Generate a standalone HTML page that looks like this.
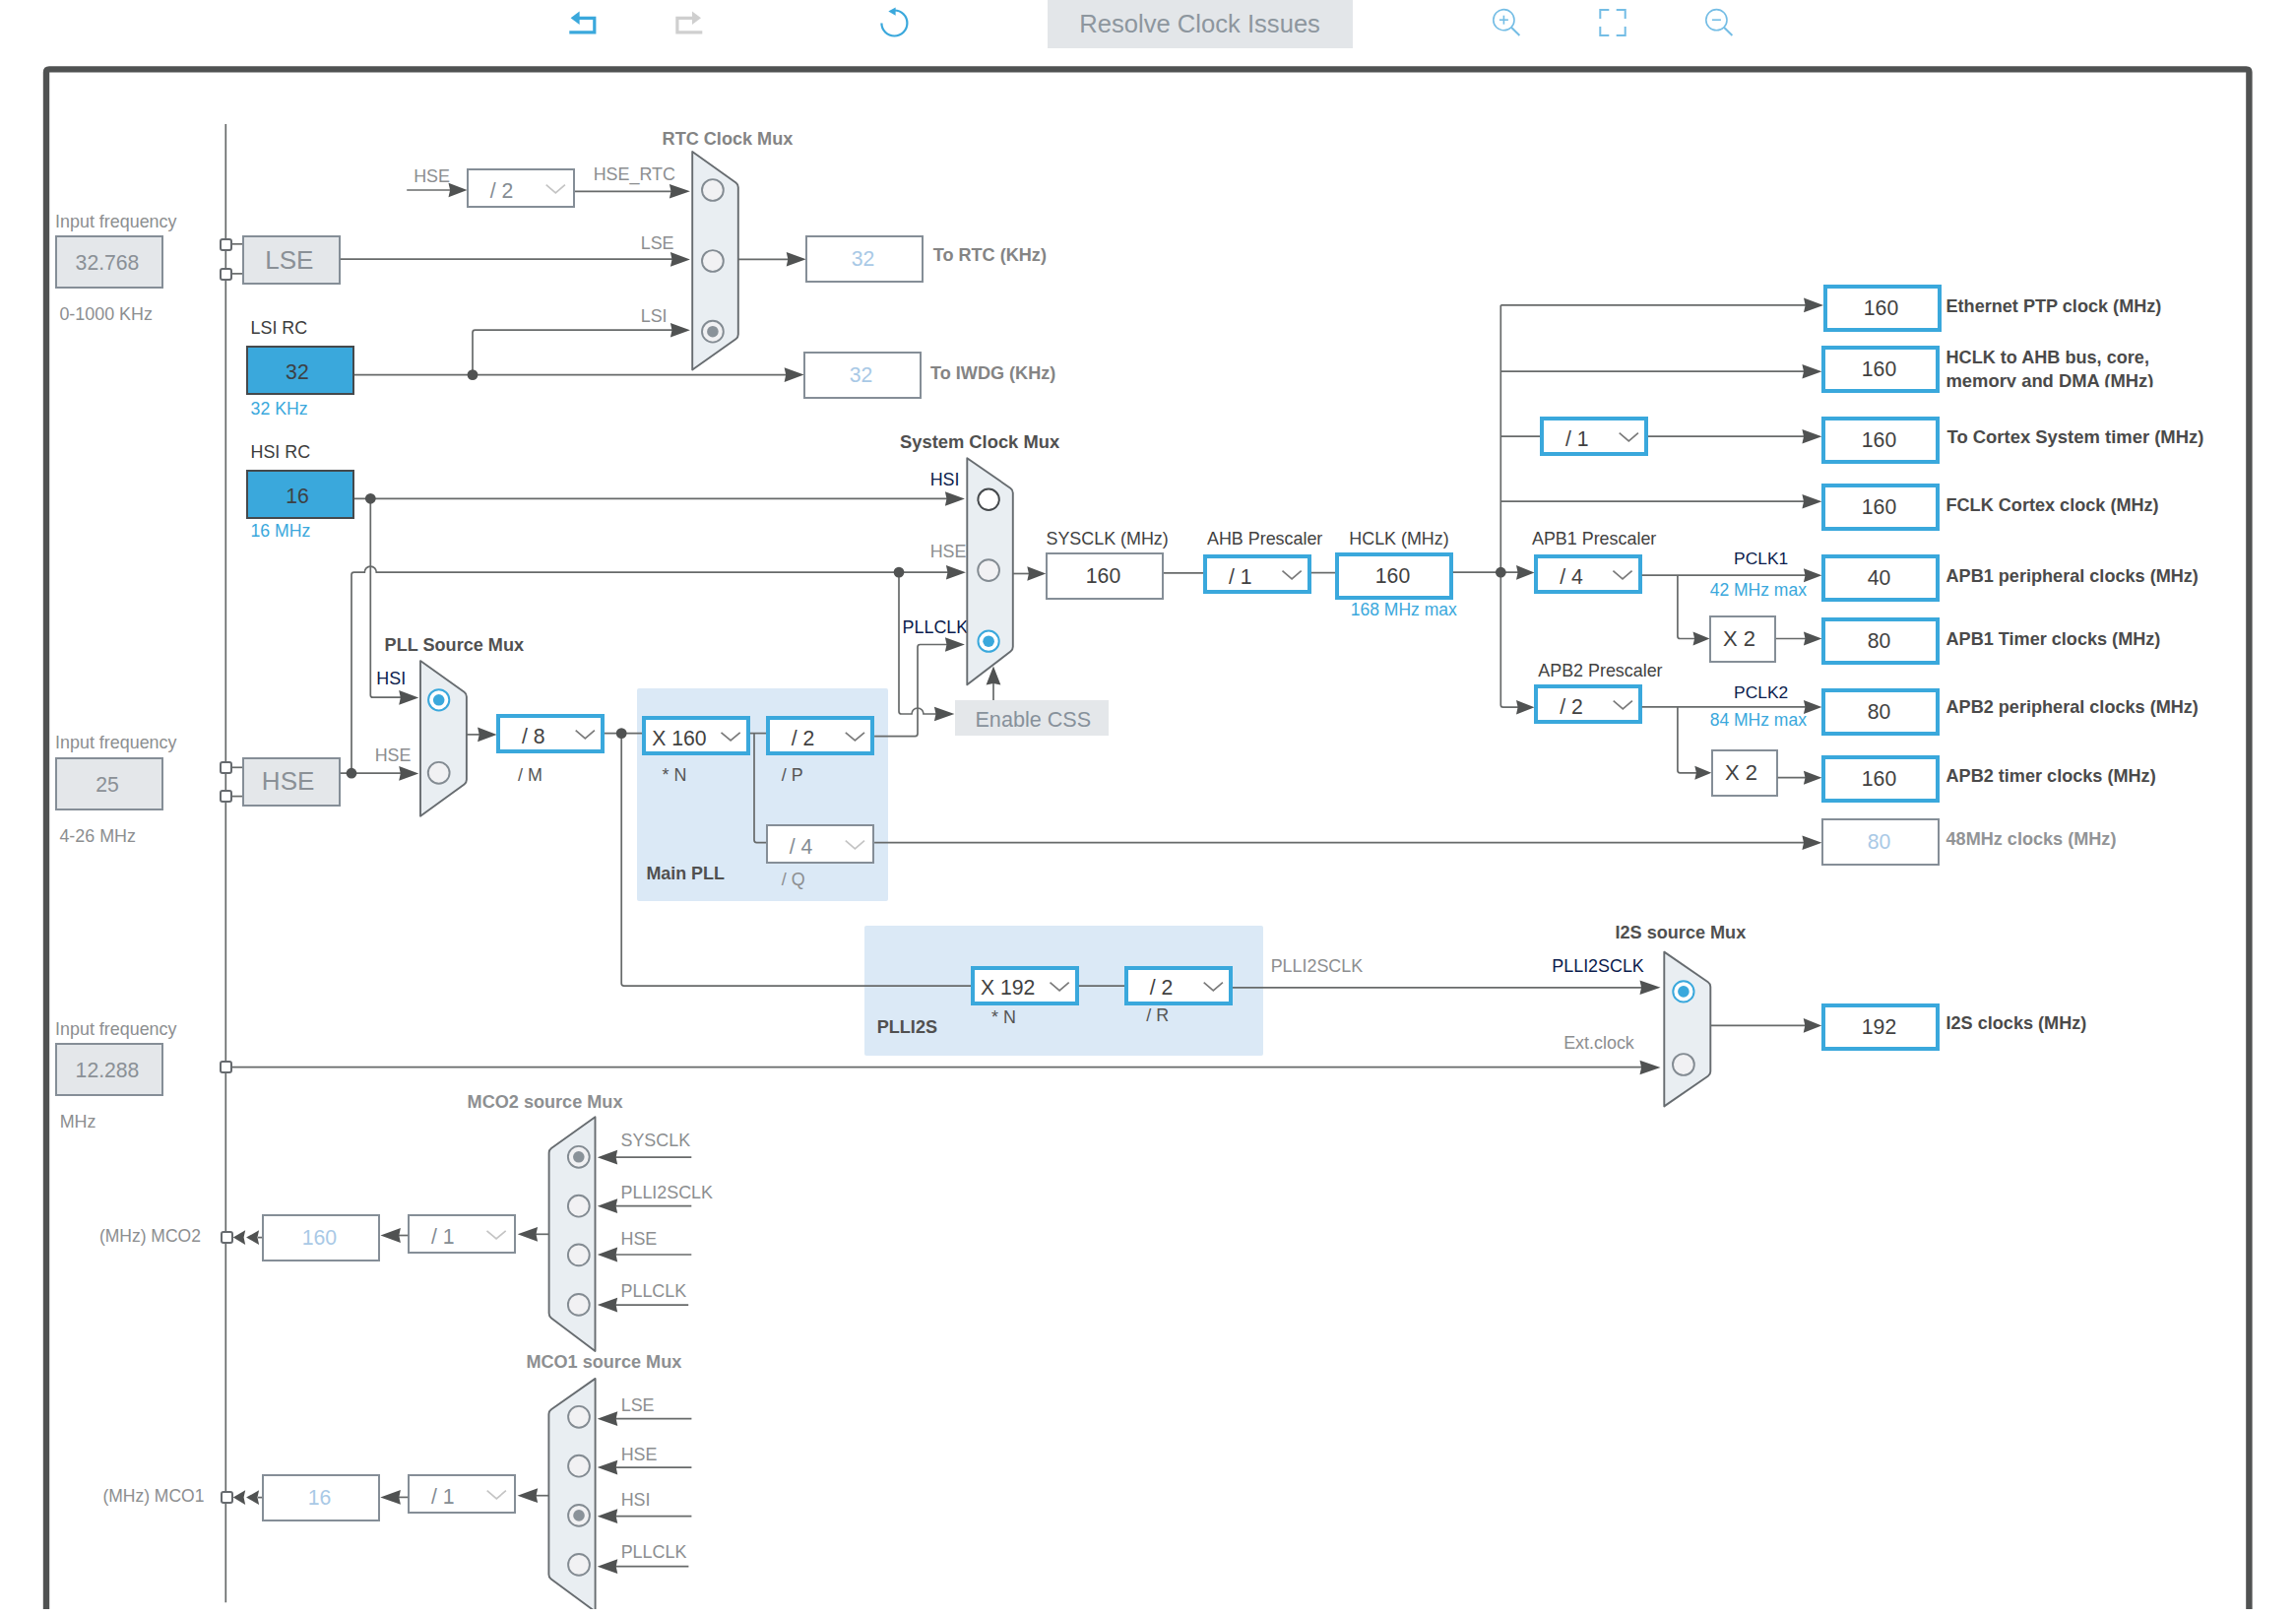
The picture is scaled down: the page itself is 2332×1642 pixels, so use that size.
<!DOCTYPE html>
<html><head><meta charset="utf-8"><title>Clock Configuration</title>
<style>
html,body{margin:0;padding:0;background:#fff;}
body{width:2332px;height:1642px;overflow:hidden;font-family:"Liberation Sans",sans-serif;}
svg{display:block;font-family:"Liberation Sans",sans-serif;}
</style></head><body>
<svg width="2332" height="1642" viewBox="0 0 2332 1642">
<rect x="1064.00" y="0.00" width="310.00" height="49.00" rx="0" fill="#e3e6e9"/>
<rect x="647.00" y="699.00" width="255.00" height="216.00" rx="2" fill="#dbe9f6"/>
<rect x="878.00" y="940.00" width="405.00" height="132.00" rx="2" fill="#dbe9f6"/>
<rect x="970.00" y="711.00" width="156.00" height="36.00" rx="0" fill="#e4e7ea"/>
<text x="1218.6" y="33.0" font-size="25.6" fill="#8d969e" font-weight="normal" text-anchor="middle" >Resolve Clock Issues</text>
<g fill="none" stroke="#3aa8dc" stroke-width="3.2"><path d="M578.3,32.8 H603.8 V18.3 H586"/></g>
<polygon points="579.6,18.2 588.6,11.4 588.6,25" fill="#3aa8dc"/>
<g fill="none" stroke="#cfcfcf" stroke-width="3.2"><path d="M713.3,32.8 H687.9 V18.3 H705.6"/></g>
<polygon points="712,18.2 703,11.4 703,25" fill="#cfcfcf"/>
<path d="M908.4,10.5 A13,13 0 1 1 895.4,23.5" fill="none" stroke="#3aa8dc" stroke-width="2.2"/>
<polygon points="902.3,11.6 909.6,7.6 909.6,15.8" fill="#3aa8dc"/>
<circle cx="1527.4" cy="20.2" r="10.6" fill="none" stroke="#74bde5" stroke-width="1.6"/>
<path d="M1535.0,27.8 L1543.4,36" stroke="#74bde5" stroke-width="2" fill="none"/>
<path d="M1522.9,20.2 H1531.9" stroke="#74bde5" stroke-width="1.6" fill="none"/>
<path d="M1527.4,15.7 V24.7" stroke="#74bde5" stroke-width="1.6" fill="none"/>
<circle cx="1743.4" cy="20.2" r="10.6" fill="none" stroke="#74bde5" stroke-width="1.6"/>
<path d="M1751.0,27.8 L1759.4,36" stroke="#74bde5" stroke-width="2" fill="none"/>
<path d="M1738.9,20.2 H1747.9" stroke="#74bde5" stroke-width="1.6" fill="none"/>
<path d="M1625.3,19 V10 H1634.3 M1641.7,10 H1650.7 V19 M1650.7,27 V36 H1641.7 M1634.3,36 H1625.3 V27" fill="none" stroke="#74bde5" stroke-width="2"/>
<path d="M47,1634 V73.3 Q47,70.4 50,70.4 H2281.5 Q2284.4,70.4 2284.4,73.3 V1634" fill="none" stroke="#505252" stroke-width="6.4"/>
<path d="M229.3,126 V1627.3" fill="none" stroke="#676a6a" stroke-width="1.7" />
<text x="56.1" y="230.6" font-size="17.9" fill="#8c8e90" font-weight="normal" text-anchor="start" >Input frequency</text>
<rect x="57.00" y="240.00" width="108.00" height="52.00" rx="0" fill="#e4e7ea" stroke="#858e97" stroke-width="2"/>
<text x="109.0" y="274.2" font-size="21.2" fill="#8a9096" font-weight="normal" text-anchor="middle" >32.768</text>
<text x="60.4" y="324.6" font-size="17.9" fill="#8c8e90" font-weight="normal" text-anchor="start" >0-1000 KHz</text>
<polyline points="235.0,247.8 246.5,247.8" fill="none" stroke="#676a6a" stroke-width="1.7" />
<polyline points="235.0,277.9 246.5,277.9" fill="none" stroke="#676a6a" stroke-width="1.7" />
<rect x="224.00" y="243.00" width="11.00" height="11.00" rx="2" fill="#fff" stroke="#666a6e" stroke-width="2"/>
<rect x="224.00" y="273.00" width="11.00" height="11.00" rx="2" fill="#fff" stroke="#666a6e" stroke-width="2"/>
<rect x="247.00" y="240.00" width="98.00" height="48.00" rx="0" fill="#e4e7ea" stroke="#858e97" stroke-width="2"/>
<text x="293.8" y="272.8" font-size="26" fill="#8a9096" font-weight="normal" text-anchor="middle" >LSE</text>
<polyline points="345.7,263.2 690.0,263.2" fill="none" stroke="#676a6a" stroke-width="1.7" />
<polygon points="700.9,263.4 680.9,256.1 682.5,263.4 680.9,270.7" fill="#505252"/>
<text x="650.7" y="252.5" font-size="17.9" fill="#8c8e90" font-weight="normal" text-anchor="start" >LSE</text>
<text x="420.2" y="184.7" font-size="17.9" fill="#8c8e90" font-weight="normal" text-anchor="start" >HSE</text>
<polyline points="413.2,193.0 460.0,193.0" fill="none" stroke="#676a6a" stroke-width="1.7" />
<polygon points="474.5,193.0 455.5,185.7 457.1,193.0 455.5,200.3" fill="#505252"/>
<rect x="475.00" y="172.00" width="108.00" height="38.00" rx="0" fill="#fff" stroke="#858e97" stroke-width="2"/>
<text x="497.7" y="200.5" font-size="21.2" fill="#848c93" font-weight="normal" text-anchor="start" >/ 2</text>
<path d="M554.7,187.7 L564.3,195.9 L573.9,187.7" fill="none" stroke="#c4c4c4" stroke-width="1.7" />
<text x="602.7" y="182.7" font-size="17.9" fill="#8c8e90" font-weight="normal" text-anchor="start" >HSE_RTC</text>
<polyline points="584.0,194.3 690.0,194.3" fill="none" stroke="#676a6a" stroke-width="1.7" />
<polygon points="700.9,194.3 679.9,187.0 681.5,194.3 679.9,201.6" fill="#505252"/>
<text x="672.6" y="146.9" font-size="18.1" fill="#848484" font-weight="bold" text-anchor="start" >RTC Clock Mux</text>
<path d="M703.2,154.0 L747.4,185.5 Q749.8,187.2 749.8,190.2 L749.8,339.5 Q749.8,342.5 747.4,344.2 L703.2,375.5 Z" fill="#e9eef2" stroke="#676c70" stroke-width="1.9" stroke-linejoin="round" />
<circle cx="723.9" cy="193.0" r="10.899999999999999" fill="#f1f1f3" stroke="#838b92" stroke-width="1.9"/>
<circle cx="723.9" cy="265.0" r="10.899999999999999" fill="#f1f1f3" stroke="#838b92" stroke-width="1.9"/>
<circle cx="723.9" cy="336.7" r="10.899999999999999" fill="#f1f1f3" stroke="#838b92" stroke-width="1.9"/>
<circle cx="723.9" cy="336.7" r="5.8" fill="#8a9299"/>
<polyline points="749.7,263.3 805.0,263.3" fill="none" stroke="#676a6a" stroke-width="1.7" />
<polygon points="818.7,263.3 798.7,256.0 800.3,263.3 798.7,270.6" fill="#505252"/>
<rect x="819.00" y="240.00" width="118.00" height="46.00" rx="0" fill="#fff" stroke="#858e97" stroke-width="2"/>
<text x="876.5" y="270.2" font-size="21.2" fill="#a9c9e6" font-weight="normal" text-anchor="middle" >32</text>
<text x="947.7" y="265.0" font-size="18.1" fill="#848484" font-weight="bold" text-anchor="start" >To RTC (KHz)</text>
<text x="254.5" y="338.8" font-size="17.9" fill="#3c3c3c" font-weight="normal" text-anchor="start" >LSI RC</text>
<rect x="251.00" y="352.00" width="108.00" height="48.00" rx="0" fill="#3aa8dc" stroke="#45494c" stroke-width="2"/>
<text x="301.9" y="384.6" font-size="21.2" fill="#3d4145" font-weight="normal" text-anchor="middle" >32</text>
<text x="254.6" y="420.7" font-size="17.7" fill="#3aa8dc" font-weight="normal" text-anchor="start" >32 KHz</text>
<polyline points="359.8,380.6 805.0,380.6" fill="none" stroke="#676a6a" stroke-width="1.7" />
<polygon points="816.6,380.6 796.6,373.3 798.2,380.6 796.6,387.9" fill="#505252"/>
<path d="M480,380.6 V337.7 Q480,335.2 482.5,335.2 H690" fill="none" stroke="#676a6a" stroke-width="1.7" />
<polygon points="700.9,335.2 680.9,327.9 682.5,335.2 680.9,342.5" fill="#505252"/>
<text x="650.7" y="326.6" font-size="17.9" fill="#8c8e90" font-weight="normal" text-anchor="start" >LSI</text>
<rect x="817.00" y="358.00" width="118.00" height="46.00" rx="0" fill="#fff" stroke="#858e97" stroke-width="2"/>
<text x="874.5" y="388.2" font-size="21.2" fill="#a9c9e6" font-weight="normal" text-anchor="middle" >32</text>
<text x="945.0" y="384.5" font-size="18.1" fill="#848484" font-weight="bold" text-anchor="start" >To IWDG (KHz)</text>
<text x="254.5" y="465.0" font-size="17.9" fill="#3c3c3c" font-weight="normal" text-anchor="start" >HSI RC</text>
<rect x="251.00" y="478.00" width="108.00" height="48.00" rx="0" fill="#3aa8dc" stroke="#45494c" stroke-width="2"/>
<text x="302.0" y="510.6" font-size="21.2" fill="#3d4145" font-weight="normal" text-anchor="middle" >16</text>
<text x="254.5" y="544.7" font-size="17.7" fill="#3aa8dc" font-weight="normal" text-anchor="start" >16 MHz</text>
<polyline points="359.8,506.3 968.0,506.3" fill="none" stroke="#676a6a" stroke-width="1.7" />
<polygon points="979.9,506.5 959.9,499.2 961.5,506.5 959.9,513.8" fill="#505252"/>
<path d="M376.3,506.3 V705.7 Q376.3,708.2 378.8,708.2 H410" fill="none" stroke="#676a6a" stroke-width="1.7" />
<polygon points="425.2,708.4 405.2,701.1 406.8,708.4 405.2,715.7" fill="#505252"/>
<text x="56.1" y="760.1" font-size="17.9" fill="#8c8e90" font-weight="normal" text-anchor="start" >Input frequency</text>
<rect x="57.00" y="770.00" width="108.00" height="52.00" rx="0" fill="#e4e7ea" stroke="#858e97" stroke-width="2"/>
<text x="109.0" y="804.2" font-size="21.2" fill="#8a9096" font-weight="normal" text-anchor="middle" >25</text>
<text x="60.4" y="854.8" font-size="17.9" fill="#8c8e90" font-weight="normal" text-anchor="start" >4-26 MHz</text>
<polyline points="235.0,779.3 246.5,779.3" fill="none" stroke="#676a6a" stroke-width="1.7" />
<polyline points="235.0,808.6 246.5,808.6" fill="none" stroke="#676a6a" stroke-width="1.7" />
<rect x="224.00" y="774.00" width="11.00" height="11.00" rx="2" fill="#fff" stroke="#666a6e" stroke-width="2"/>
<rect x="224.00" y="803.00" width="11.00" height="11.00" rx="2" fill="#fff" stroke="#666a6e" stroke-width="2"/>
<rect x="247.00" y="770.00" width="98.00" height="48.00" rx="0" fill="#e4e7ea" stroke="#858e97" stroke-width="2"/>
<text x="292.6" y="802.4" font-size="26" fill="#8a9096" font-weight="normal" text-anchor="middle" >HSE</text>
<polyline points="345.7,785.2 410.0,785.2" fill="none" stroke="#676a6a" stroke-width="1.7" />
<polygon points="425.2,785.4 405.2,778.1 406.8,785.4 405.2,792.7" fill="#505252"/>
<path d="M357,785.2 V583.6 Q357,581.1 359.5,581.1 H370.3 A6,6 0 0 1 382.3,581.1 H968" fill="none" stroke="#676a6a" stroke-width="1.7" />
<polygon points="980.9,581.2 960.9,573.9 962.5,581.2 960.9,588.5" fill="#505252"/>
<path d="M913,581.1 V722.4 Q913,725 915.6,725 H926 A6,6 0 0 1 938,725 H955" fill="none" stroke="#676a6a" stroke-width="1.7" />
<polygon points="969.4,725.0 948.9,717.7 950.5,725.0 948.9,732.3" fill="#505252"/>
<text x="390.6" y="661.2" font-size="18.1" fill="#505050" font-weight="bold" text-anchor="start" >PLL Source Mux</text>
<text x="382.3" y="694.6" font-size="17.9" fill="#0b1c4d" font-weight="normal" text-anchor="start" >HSI</text>
<text x="380.7" y="773.0" font-size="17.9" fill="#8c8e90" font-weight="normal" text-anchor="start" >HSE</text>
<path d="M427.0,671.1 L471.5,702.8 Q473.9,704.5 473.9,707.5 L473.9,791.8 Q473.9,794.8 471.5,796.6 L427.0,828.7 Z" fill="#e9eef2" stroke="#676c70" stroke-width="1.9" stroke-linejoin="round" />
<circle cx="445.7" cy="710.8" r="10.6" fill="#fff" stroke="#3aa8dc" stroke-width="2"/>
<circle cx="445.7" cy="710.8" r="5.8" fill="#3aa8dc"/>
<circle cx="445.7" cy="784.8" r="10.899999999999999" fill="#f1f1f3" stroke="#838b92" stroke-width="1.9"/>
<polyline points="473.9,745.9 490.0,745.9" fill="none" stroke="#676a6a" stroke-width="1.7" />
<polygon points="504.6,745.9 485.1,738.6 486.7,745.9 485.1,753.2" fill="#505252"/>
<rect x="506.00" y="727.00" width="106.00" height="36.00" rx="0" fill="#fff" stroke="#3aa8dc" stroke-width="4"/>
<text x="530.1" y="754.5" font-size="21.2" fill="#414141" font-weight="normal" text-anchor="start" >/ 8</text>
<path d="M584.7,741.6 L594.3,749.9 L603.9,741.6" fill="none" stroke="#7a7a7a" stroke-width="1.7" />
<text x="526.0" y="792.5" font-size="17.9" fill="#555" font-weight="normal" text-anchor="start" >/ M</text>
<polyline points="614.0,744.6 652.1,744.6" fill="none" stroke="#676a6a" stroke-width="1.7" />
<rect x="654.00" y="729.00" width="106.00" height="36.00" rx="0" fill="#fff" stroke="#3aa8dc" stroke-width="4"/>
<text x="662.2" y="756.6" font-size="21.2" fill="#414141" font-weight="normal" text-anchor="start" >X 160</text>
<path d="M732.5,743.8 L742.1,752.0 L751.7,743.8" fill="none" stroke="#7a7a7a" stroke-width="1.7" />
<rect x="780.00" y="729.00" width="106.00" height="36.00" rx="0" fill="#fff" stroke="#3aa8dc" stroke-width="4"/>
<text x="803.7" y="756.6" font-size="21.2" fill="#414141" font-weight="normal" text-anchor="start" >/ 2</text>
<path d="M858.8,743.8 L868.4,752.0 L878.0,743.8" fill="none" stroke="#7a7a7a" stroke-width="1.7" />
<text x="672.6" y="792.6" font-size="17.9" fill="#555" font-weight="normal" text-anchor="start" >* N</text>
<text x="793.8" y="792.6" font-size="17.9" fill="#555" font-weight="normal" text-anchor="start" >/ P</text>
<polyline points="761.8,744.6 778.0,744.6" fill="none" stroke="#676a6a" stroke-width="1.7" />
<path d="M766,744.6 V853.1 Q766,855.6 768.5,855.6 H778" fill="none" stroke="#676a6a" stroke-width="1.7" />
<rect x="779.00" y="838.00" width="108.00" height="38.00" rx="0" fill="#fff" stroke="#858e97" stroke-width="2"/>
<text x="801.7" y="866.5" font-size="21.2" fill="#848c93" font-weight="normal" text-anchor="start" >/ 4</text>
<path d="M858.8,853.7 L868.4,861.9 L878.0,853.7" fill="none" stroke="#c4c4c4" stroke-width="1.7" />
<text x="656.4" y="892.7" font-size="17.9" fill="#505050" font-weight="bold" text-anchor="start" >Main PLL</text>
<text x="793.8" y="898.5" font-size="17.9" fill="#8c8e90" font-weight="normal" text-anchor="start" >/ Q</text>
<polyline points="888.1,855.6 1838.0,855.6" fill="none" stroke="#676a6a" stroke-width="1.7" />
<polygon points="1850.4,855.8 1830.4,848.5 1832.0,855.8 1830.4,863.1" fill="#505252"/>
<path d="M888.1,747.6 H929.5 Q932,747.6 932,745.1 V657 Q932,654.5 934.5,654.5 H968" fill="none" stroke="#676a6a" stroke-width="1.7" />
<polygon points="979.9,654.5 959.9,647.2 961.5,654.5 959.9,661.8" fill="#505252"/>
<text x="916.6" y="642.5" font-size="17.9" fill="#0b1c4d" font-weight="normal" text-anchor="start" >PLLCLK</text>
<text x="914.0" y="454.8" font-size="18.35" fill="#505050" font-weight="bold" text-anchor="start" >System Clock Mux</text>
<text x="944.7" y="492.6" font-size="17.9" fill="#0b1c4d" font-weight="normal" text-anchor="start" >HSI</text>
<text x="944.7" y="566.4" font-size="17.9" fill="#8c8e90" font-weight="normal" text-anchor="start" >HSE</text>
<path d="M982.3,465.3 L1026.3,495.7 Q1028.8,497.4 1028.8,500.4 L1028.8,656.7 Q1028.8,659.7 1026.4,661.5 L982.3,695.3 Z" fill="#e9eef2" stroke="#676c70" stroke-width="1.9" stroke-linejoin="round" />
<circle cx="1004.1" cy="507.3" r="10.7" fill="#fff" stroke="#45494c" stroke-width="2"/>
<circle cx="1004.1" cy="579.1" r="10.899999999999999" fill="#f1f1f3" stroke="#838b92" stroke-width="1.9"/>
<circle cx="1004.1" cy="651.2" r="10.6" fill="#fff" stroke="#3aa8dc" stroke-width="2"/>
<circle cx="1004.1" cy="651.2" r="5.8" fill="#3aa8dc"/>
<text x="1049.3" y="737.9" font-size="21.6" fill="#87919b" font-weight="normal" text-anchor="middle" >Enable CSS</text>
<polyline points="1009.0,711.1 1009.0,694.0" fill="none" stroke="#676a6a" stroke-width="1.7" />
<polygon points="1009.0,676.5 1001.6,695.5 1009.0,693.9 1016.4,695.5" fill="#505252"/>
<polyline points="1028.8,582.5 1048.0,582.5" fill="none" stroke="#676a6a" stroke-width="1.7" />
<polygon points="1062.3,582.5 1043.3,575.2 1044.9,582.5 1043.3,589.8" fill="#505252"/>
<text x="1062.5" y="553.0" font-size="17.9" fill="#414141" font-weight="normal" text-anchor="start" >SYSCLK (MHz)</text>
<rect x="1063.00" y="562.00" width="118.00" height="46.00" rx="0" fill="#fff" stroke="#858e97" stroke-width="2"/>
<text x="1120.5" y="592.2" font-size="21.2" fill="#414141" font-weight="normal" text-anchor="middle" >160</text>
<polyline points="1182.0,581.8 1222.1,581.8" fill="none" stroke="#676a6a" stroke-width="1.7" />
<text x="1226.0" y="553.0" font-size="17.9" fill="#414141" font-weight="normal" text-anchor="start" >AHB Prescaler</text>
<rect x="1224.00" y="565.00" width="106.00" height="36.00" rx="0" fill="#fff" stroke="#3aa8dc" stroke-width="4"/>
<text x="1248.0" y="592.5" font-size="21.2" fill="#414141" font-weight="normal" text-anchor="start" >/ 1</text>
<path d="M1302.5,579.6 L1312.1,587.9 L1321.7,579.6" fill="none" stroke="#7a7a7a" stroke-width="1.7" />
<polyline points="1331.8,581.6 1356.2,581.6" fill="none" stroke="#676a6a" stroke-width="1.7" />
<text x="1370.3" y="553.0" font-size="17.9" fill="#414141" font-weight="normal" text-anchor="start" >HCLK (MHz)</text>
<rect x="1358.00" y="563.00" width="116.00" height="44.00" rx="0" fill="#fff" stroke="#3aa8dc" stroke-width="4"/>
<text x="1414.5" y="592.2" font-size="21.2" fill="#414141" font-weight="normal" text-anchor="middle" >160</text>
<text x="1371.8" y="624.6" font-size="17.5" fill="#3aa8dc" font-weight="normal" text-anchor="start" >168 MHz max</text>
<polyline points="1475.8,581.2 1545.0,581.2" fill="none" stroke="#676a6a" stroke-width="1.7" />
<polygon points="1558.5,581.4 1540.0,574.1 1541.6,581.4 1540.0,588.7" fill="#505252"/>
<path d="M1524.3,309.9 V715.7 Q1524.3,718.2 1526.8,718.2 H1545" fill="none" stroke="#676a6a" stroke-width="1.7" />
<polyline points="1524.3,309.9 1838.0,309.9" fill="none" stroke="#676a6a" stroke-width="1.7" />
<polygon points="1852.0,309.9 1832.0,302.6 1833.6,309.9 1832.0,317.2" fill="#505252"/>
<rect x="1854.00" y="291.00" width="116.00" height="44.00" rx="0" fill="#fff" stroke="#3aa8dc" stroke-width="4"/>
<text x="1910.5" y="320.3" font-size="21.2" fill="#414141" font-weight="normal" text-anchor="middle" >160</text>
<text x="1976.5" y="317.1" font-size="18.1" fill="#4a4a4a" font-weight="bold" text-anchor="start" >Ethernet PTP clock (MHz)</text>
<polyline points="1524.3,377.2 1838.0,377.2" fill="none" stroke="#676a6a" stroke-width="1.7" />
<polygon points="1850.4,377.2 1830.4,369.9 1832.0,377.2 1830.4,384.5" fill="#505252"/>
<rect x="1852.00" y="353.00" width="116.00" height="44.00" rx="0" fill="#fff" stroke="#3aa8dc" stroke-width="4"/>
<text x="1908.5" y="382.2" font-size="21.2" fill="#414141" font-weight="normal" text-anchor="middle" >160</text>
<clipPath id="c1"><rect x="1970" y="340" width="300" height="53.3"/></clipPath>
<g clip-path="url(#c1)">
<text x="1976.5" y="368.9" font-size="18.1" fill="#4a4a4a" font-weight="bold" text-anchor="start" >HCLK to AHB bus, core,</text>
<text x="1976.5" y="392.5" font-size="18.4" fill="#4a4a4a" font-weight="bold" text-anchor="start" >memory and DMA (MHz)</text>
</g>
<polyline points="1524.3,443.2 1564.1,443.2" fill="none" stroke="#676a6a" stroke-width="1.7" />
<rect x="1566.00" y="425.00" width="106.00" height="36.00" rx="0" fill="#fff" stroke="#3aa8dc" stroke-width="4"/>
<text x="1590.0" y="452.5" font-size="21.2" fill="#414141" font-weight="normal" text-anchor="start" >/ 1</text>
<path d="M1644.7,439.7 L1654.3,447.9 L1663.9,439.7" fill="none" stroke="#7a7a7a" stroke-width="1.7" />
<polyline points="1673.9,443.2 1838.0,443.2" fill="none" stroke="#676a6a" stroke-width="1.7" />
<polygon points="1850.4,443.2 1830.4,435.9 1832.0,443.2 1830.4,450.5" fill="#505252"/>
<rect x="1852.00" y="425.00" width="116.00" height="44.00" rx="0" fill="#fff" stroke="#3aa8dc" stroke-width="4"/>
<text x="1908.5" y="454.2" font-size="21.2" fill="#414141" font-weight="normal" text-anchor="middle" >160</text>
<text x="1977.5" y="450.4" font-size="18.45" fill="#4a4a4a" font-weight="bold" text-anchor="start" >To Cortex System timer (MHz)</text>
<polyline points="1524.3,509.2 1838.0,509.2" fill="none" stroke="#676a6a" stroke-width="1.7" />
<polygon points="1850.4,509.2 1830.4,501.9 1832.0,509.2 1830.4,516.5" fill="#505252"/>
<rect x="1852.00" y="493.00" width="116.00" height="44.00" rx="0" fill="#fff" stroke="#3aa8dc" stroke-width="4"/>
<text x="1908.5" y="522.2" font-size="21.2" fill="#414141" font-weight="normal" text-anchor="middle" >160</text>
<text x="1976.5" y="518.8" font-size="18.1" fill="#4a4a4a" font-weight="bold" text-anchor="start" >FCLK Cortex clock (MHz)</text>
<text x="1556.0" y="553.0" font-size="17.9" fill="#414141" font-weight="normal" text-anchor="start" >APB1 Prescaler</text>
<rect x="1560.00" y="565.00" width="106.00" height="36.00" rx="0" fill="#fff" stroke="#3aa8dc" stroke-width="4"/>
<text x="1584.3" y="592.5" font-size="21.2" fill="#414141" font-weight="normal" text-anchor="start" >/ 4</text>
<path d="M1638.4,579.6 L1648.0,587.9 L1657.6,579.6" fill="none" stroke="#7a7a7a" stroke-width="1.7" />
<polyline points="1667.7,584.2 1838.0,584.2" fill="none" stroke="#676a6a" stroke-width="1.7" />
<polygon points="1850.4,584.3 1831.9,577.3 1833.5,584.3 1831.9,591.3" fill="#505252"/>
<text x="1761.1" y="572.8" font-size="17.4" fill="#0b1c4d" font-weight="normal" text-anchor="start" >PCLK1</text>
<text x="1736.7" y="604.6" font-size="17.5" fill="#3aa8dc" font-weight="normal" text-anchor="start" >42 MHz max</text>
<rect x="1852.00" y="565.00" width="116.00" height="44.00" rx="0" fill="#fff" stroke="#3aa8dc" stroke-width="4"/>
<text x="1908.5" y="594.2" font-size="21.2" fill="#414141" font-weight="normal" text-anchor="middle" >40</text>
<text x="1976.5" y="590.8" font-size="18.1" fill="#4a4a4a" font-weight="bold" text-anchor="start" >APB1 peripheral clocks (MHz)</text>
<path d="M1703.9,584.2 V646 Q1703.9,648.5 1706.4,648.5 H1722" fill="none" stroke="#676a6a" stroke-width="1.7" />
<polygon points="1736.5,648.5 1719.5,641.5 1721.1,648.5 1719.5,655.5" fill="#505252"/>
<rect x="1737.00" y="626.00" width="66.00" height="46.00" rx="0" fill="#fff" stroke="#858e97" stroke-width="2"/>
<text x="1766.6" y="656.2" font-size="22" fill="#414141" font-weight="normal" text-anchor="middle" >X 2</text>
<polyline points="1803.8,648.5 1838.0,648.5" fill="none" stroke="#676a6a" stroke-width="1.7" />
<polygon points="1850.4,648.5 1831.9,641.5 1833.5,648.5 1831.9,655.5" fill="#505252"/>
<rect x="1852.00" y="629.00" width="116.00" height="44.00" rx="0" fill="#fff" stroke="#3aa8dc" stroke-width="4"/>
<text x="1908.5" y="658.2" font-size="21.2" fill="#414141" font-weight="normal" text-anchor="middle" >80</text>
<text x="1976.5" y="654.8" font-size="18.1" fill="#4a4a4a" font-weight="bold" text-anchor="start" >APB1 Timer clocks (MHz)</text>
<polygon points="1558.5,718.2 1540.0,710.9 1541.6,718.2 1540.0,725.5" fill="#505252"/>
<text x="1562.3" y="686.9" font-size="17.9" fill="#414141" font-weight="normal" text-anchor="start" >APB2 Prescaler</text>
<rect x="1560.00" y="697.00" width="106.00" height="36.00" rx="0" fill="#fff" stroke="#3aa8dc" stroke-width="4"/>
<text x="1584.3" y="724.5" font-size="21.2" fill="#414141" font-weight="normal" text-anchor="start" >/ 2</text>
<path d="M1638.7,711.7 L1648.3,719.9 L1657.9,711.7" fill="none" stroke="#7a7a7a" stroke-width="1.7" />
<polyline points="1667.7,717.9 1838.0,717.9" fill="none" stroke="#676a6a" stroke-width="1.7" />
<polygon points="1850.4,717.9 1831.9,710.9 1833.5,717.9 1831.9,724.9" fill="#505252"/>
<text x="1761.1" y="708.6" font-size="17.4" fill="#0b1c4d" font-weight="normal" text-anchor="start" >PCLK2</text>
<text x="1736.7" y="736.8" font-size="17.5" fill="#3aa8dc" font-weight="normal" text-anchor="start" >84 MHz max</text>
<rect x="1852.00" y="701.00" width="116.00" height="44.00" rx="0" fill="#fff" stroke="#3aa8dc" stroke-width="4"/>
<text x="1908.5" y="730.2" font-size="21.2" fill="#414141" font-weight="normal" text-anchor="middle" >80</text>
<text x="1976.5" y="724.4" font-size="18.1" fill="#4a4a4a" font-weight="bold" text-anchor="start" >APB2 peripheral clocks (MHz)</text>
<path d="M1703.9,717.9 V782.3 Q1703.9,784.8 1706.4,784.8 H1724" fill="none" stroke="#676a6a" stroke-width="1.7" />
<polygon points="1738.3,784.8 1721.3,777.8 1722.9,784.8 1721.3,791.8" fill="#505252"/>
<rect x="1739.00" y="762.00" width="66.00" height="46.00" rx="0" fill="#fff" stroke="#858e97" stroke-width="2"/>
<text x="1768.6" y="792.2" font-size="22" fill="#414141" font-weight="normal" text-anchor="middle" >X 2</text>
<polyline points="1805.6,789.7 1838.0,789.7" fill="none" stroke="#676a6a" stroke-width="1.7" />
<polygon points="1850.4,789.7 1831.9,782.7 1833.5,789.7 1831.9,796.7" fill="#505252"/>
<rect x="1852.00" y="769.00" width="116.00" height="44.00" rx="0" fill="#fff" stroke="#3aa8dc" stroke-width="4"/>
<text x="1908.5" y="798.2" font-size="21.2" fill="#414141" font-weight="normal" text-anchor="middle" >160</text>
<text x="1976.5" y="794.3" font-size="18.1" fill="#4a4a4a" font-weight="bold" text-anchor="start" >APB2 timer clocks (MHz)</text>
<rect x="1851.00" y="832.00" width="118.00" height="46.00" rx="0" fill="#fff" stroke="#858e97" stroke-width="2"/>
<text x="1908.5" y="862.2" font-size="21.2" fill="#a9c9e6" font-weight="normal" text-anchor="middle" >80</text>
<text x="1976.5" y="858.2" font-size="18.1" fill="#929496" font-weight="bold" text-anchor="start" >48MHz clocks (MHz)</text>
<path d="M631.2,744.6 V998.6 Q631.2,1001.1 633.7,1001.1 H986.1" fill="none" stroke="#676a6a" stroke-width="1.7" />
<rect x="988.00" y="983.00" width="106.00" height="36.00" rx="0" fill="#fff" stroke="#3aa8dc" stroke-width="4"/>
<text x="995.9" y="1010.4" font-size="21.2" fill="#414141" font-weight="normal" text-anchor="start" >X 192</text>
<path d="M1066.5,997.6 L1076.1,1005.8 L1085.7,997.6" fill="none" stroke="#7a7a7a" stroke-width="1.7" />
<text x="1007.0" y="1038.5" font-size="17.9" fill="#555" font-weight="normal" text-anchor="start" >* N</text>
<text x="890.7" y="1048.6" font-size="18.1" fill="#505050" font-weight="bold" text-anchor="start" >PLLI2S</text>
<polyline points="1095.8,1001.1 1142.3,1001.1" fill="none" stroke="#676a6a" stroke-width="1.7" />
<rect x="1144.00" y="983.00" width="106.00" height="36.00" rx="0" fill="#fff" stroke="#3aa8dc" stroke-width="4"/>
<text x="1167.8" y="1010.4" font-size="21.2" fill="#414141" font-weight="normal" text-anchor="start" >/ 2</text>
<path d="M1222.7,997.6 L1232.3,1005.8 L1241.9,997.6" fill="none" stroke="#7a7a7a" stroke-width="1.7" />
<text x="1164.2" y="1036.7" font-size="17.9" fill="#555" font-weight="normal" text-anchor="start" >/ R</text>
<text x="1290.7" y="986.9" font-size="17.9" fill="#8c8e90" font-weight="normal" text-anchor="start" >PLLI2SCLK</text>
<text x="1576.3" y="986.9" font-size="17.9" fill="#0b1c4d" font-weight="normal" text-anchor="start" >PLLI2SCLK</text>
<polyline points="1252.0,1002.8 1675.0,1002.8" fill="none" stroke="#676a6a" stroke-width="1.7" />
<polygon points="1686.5,1002.8 1665.5,995.5 1667.1,1002.8 1665.5,1010.1" fill="#505252"/>
<text x="1640.5" y="952.6" font-size="18.1" fill="#505050" font-weight="bold" text-anchor="start" >I2S source Mux</text>
<path d="M1690.3,966.6 L1734.8,997.3 Q1737.3,999.0 1737.3,1002.0 L1737.3,1088.0 Q1737.3,1091.0 1734.8,1092.7 L1690.3,1123.4 Z" fill="#e9eef2" stroke="#676c70" stroke-width="1.9" stroke-linejoin="round" />
<circle cx="1709.9" cy="1006.9" r="10.6" fill="#fff" stroke="#3aa8dc" stroke-width="2"/>
<circle cx="1709.9" cy="1006.9" r="5.8" fill="#3aa8dc"/>
<circle cx="1709.9" cy="1081.0" r="10.899999999999999" fill="#f1f1f3" stroke="#838b92" stroke-width="1.9"/>
<text x="1588.2" y="1064.9" font-size="17.9" fill="#8c8e90" font-weight="normal" text-anchor="start" >Ext.clock</text>
<polyline points="1737.3,1041.4 1838.0,1041.4" fill="none" stroke="#676a6a" stroke-width="1.7" />
<polygon points="1850.2,1041.4 1831.7,1034.1 1833.3,1041.4 1831.7,1048.7" fill="#505252"/>
<rect x="1852.00" y="1021.00" width="116.00" height="44.00" rx="0" fill="#fff" stroke="#3aa8dc" stroke-width="4"/>
<text x="1908.5" y="1050.2" font-size="21.2" fill="#414141" font-weight="normal" text-anchor="middle" >192</text>
<text x="1976.5" y="1044.6" font-size="18.1" fill="#4a4a4a" font-weight="bold" text-anchor="start" >I2S clocks (MHz)</text>
<text x="56.1" y="1050.6" font-size="17.9" fill="#8c8e90" font-weight="normal" text-anchor="start" >Input frequency</text>
<rect x="57.00" y="1060.00" width="108.00" height="52.00" rx="0" fill="#e4e7ea" stroke="#858e97" stroke-width="2"/>
<text x="109.0" y="1094.2" font-size="21.2" fill="#8a9096" font-weight="normal" text-anchor="middle" >12.288</text>
<text x="60.7" y="1145.0" font-size="17.9" fill="#8c8e90" font-weight="normal" text-anchor="start" >MHz</text>
<polyline points="236.0,1083.7 1675.0,1083.7" fill="none" stroke="#676a6a" stroke-width="1.7" />
<polygon points="1686.5,1084.0 1665.5,1076.7 1667.1,1084.0 1665.5,1091.3" fill="#505252"/>
<rect x="224.00" y="1078.00" width="11.00" height="11.00" rx="2" fill="#fff" stroke="#666a6e" stroke-width="2"/>
<text x="474.6" y="1124.5" font-size="18.1" fill="#8d8f91" font-weight="bold" text-anchor="start" >MCO2 source Mux</text>
<path d="M604.5,1134.3 L560.0,1166.0 Q557.6,1167.7 557.6,1170.7 L557.6,1333.6 Q557.6,1336.6 560.0,1338.4 L604.5,1371.9 Z" fill="#e9eef2" stroke="#676c70" stroke-width="1.9" stroke-linejoin="round" />
<circle cx="587.8" cy="1174.8" r="10.899999999999999" fill="#f1f1f3" stroke="#838b92" stroke-width="1.9"/>
<circle cx="587.8" cy="1174.8" r="5.8" fill="#8a9299"/>
<polyline points="702.3,1175.2 620.0,1175.2" fill="none" stroke="#676a6a" stroke-width="1.7" />
<polygon points="606.8,1175.2 627.2,1167.8 625.6,1175.2 627.2,1182.6" fill="#505252"/>
<text x="630.5" y="1164.0" font-size="17.9" fill="#8c8e90" font-weight="normal" text-anchor="start" >SYSCLK</text>
<circle cx="587.8" cy="1224.7" r="10.899999999999999" fill="#f1f1f3" stroke="#838b92" stroke-width="1.9"/>
<polyline points="702.3,1224.7 620.0,1224.7" fill="none" stroke="#676a6a" stroke-width="1.7" />
<polygon points="606.8,1224.7 627.2,1217.3 625.6,1224.7 627.2,1232.1" fill="#505252"/>
<text x="630.5" y="1216.5" font-size="17.9" fill="#8c8e90" font-weight="normal" text-anchor="start" >PLLI2SCLK</text>
<circle cx="587.8" cy="1274.4" r="10.899999999999999" fill="#f1f1f3" stroke="#838b92" stroke-width="1.9"/>
<polyline points="702.3,1274.0 620.0,1274.0" fill="none" stroke="#676a6a" stroke-width="1.7" />
<polygon points="606.8,1274.0 627.2,1266.6 625.6,1274.0 627.2,1281.4" fill="#505252"/>
<text x="630.5" y="1264.2" font-size="17.9" fill="#8c8e90" font-weight="normal" text-anchor="start" >HSE</text>
<circle cx="587.8" cy="1324.9" r="10.899999999999999" fill="#f1f1f3" stroke="#838b92" stroke-width="1.9"/>
<polyline points="699.2,1325.1 620.0,1325.1" fill="none" stroke="#676a6a" stroke-width="1.7" />
<polygon points="606.8,1325.1 627.2,1317.7 625.6,1325.1 627.2,1332.5" fill="#505252"/>
<text x="630.5" y="1316.7" font-size="17.9" fill="#8c8e90" font-weight="normal" text-anchor="start" >PLLCLK</text>
<polyline points="557.6,1253.3 540.0,1253.3" fill="none" stroke="#676a6a" stroke-width="1.7" />
<polygon points="525.7,1253.3 546.1,1245.9 544.5,1253.3 546.1,1260.7" fill="#505252"/>
<rect x="415.00" y="1234.00" width="108.00" height="38.00" rx="0" fill="#fff" stroke="#858e97" stroke-width="2"/>
<text x="438.1" y="1262.6" font-size="21.2" fill="#848c93" font-weight="normal" text-anchor="start" >/ 1</text>
<path d="M494.5,1249.8 L504.1,1258.0 L513.7,1249.8" fill="none" stroke="#c4c4c4" stroke-width="1.7" />
<polyline points="414.3,1254.5 400.0,1254.5" fill="none" stroke="#676a6a" stroke-width="1.7" />
<polygon points="386.5,1254.5 406.9,1247.1 405.3,1254.5 406.9,1261.9" fill="#505252"/>
<rect x="267.00" y="1234.00" width="118.00" height="46.00" rx="0" fill="#fff" stroke="#858e97" stroke-width="2"/>
<text x="324.4" y="1264.2" font-size="21.2" fill="#a9c9e6" font-weight="normal" text-anchor="middle" >160</text>
<polygon points="236.8,1256.6 249.2,1249.2 247.6,1256.6 249.2,1264.0" fill="#505252"/>
<polygon points="250.1,1256.6 263.1,1249.2 261.5,1256.6 263.1,1264.0" fill="#505252"/>
<polyline points="262.0,1256.6 266.1,1256.6" fill="none" stroke="#676a6a" stroke-width="1.7" />
<rect x="225.00" y="1251.00" width="11.00" height="11.00" rx="2" fill="#fff" stroke="#666a6e" stroke-width="2"/>
<text x="100.9" y="1260.6" font-size="17.5" fill="#8c8e90" font-weight="normal" text-anchor="start" >(MHz) MCO2</text>
<text x="534.4" y="1388.5" font-size="18.1" fill="#8d8f91" font-weight="bold" text-anchor="start" >MCO1 source Mux</text>
<path d="M604.6,1399.9 L559.9,1431.3 Q557.4,1433.0 557.4,1436.0 L557.4,1598.8 Q557.4,1601.8 559.8,1603.6 L604.6,1636.5 Z" fill="#e9eef2" stroke="#676c70" stroke-width="1.9" stroke-linejoin="round" />
<circle cx="588.0" cy="1438.8" r="10.899999999999999" fill="#f1f1f3" stroke="#838b92" stroke-width="1.9"/>
<polyline points="702.4,1440.7 620.0,1440.7" fill="none" stroke="#676a6a" stroke-width="1.7" />
<polygon points="606.7,1440.7 627.3,1433.3 625.7,1440.7 627.3,1448.1" fill="#505252"/>
<text x="630.7" y="1432.6" font-size="17.9" fill="#8c8e90" font-weight="normal" text-anchor="start" >LSE</text>
<circle cx="588.0" cy="1488.7" r="10.899999999999999" fill="#f1f1f3" stroke="#838b92" stroke-width="1.9"/>
<polyline points="702.4,1490.1 620.0,1490.1" fill="none" stroke="#676a6a" stroke-width="1.7" />
<polygon points="606.7,1490.1 627.3,1482.7 625.7,1490.1 627.3,1497.5" fill="#505252"/>
<text x="630.7" y="1482.6" font-size="17.9" fill="#8c8e90" font-weight="normal" text-anchor="start" >HSE</text>
<circle cx="588.0" cy="1538.9" r="10.899999999999999" fill="#f1f1f3" stroke="#838b92" stroke-width="1.9"/>
<circle cx="588.0" cy="1538.9" r="5.8" fill="#8a9299"/>
<polyline points="702.4,1539.7 620.0,1539.7" fill="none" stroke="#676a6a" stroke-width="1.7" />
<polygon points="606.7,1539.7 627.3,1532.3 625.7,1539.7 627.3,1547.1" fill="#505252"/>
<text x="630.7" y="1528.6" font-size="17.9" fill="#8c8e90" font-weight="normal" text-anchor="start" >HSI</text>
<circle cx="588.0" cy="1588.9" r="10.899999999999999" fill="#f1f1f3" stroke="#838b92" stroke-width="1.9"/>
<polyline points="699.4,1590.7 620.0,1590.7" fill="none" stroke="#676a6a" stroke-width="1.7" />
<polygon points="606.7,1590.7 627.3,1583.3 625.7,1590.7 627.3,1598.1" fill="#505252"/>
<text x="630.7" y="1582.3" font-size="17.9" fill="#8c8e90" font-weight="normal" text-anchor="start" >PLLCLK</text>
<polyline points="557.4,1518.7 540.0,1518.7" fill="none" stroke="#676a6a" stroke-width="1.7" />
<polygon points="525.6,1518.7 546.2,1511.3 544.6,1518.7 546.2,1526.1" fill="#505252"/>
<rect x="415.00" y="1498.00" width="108.00" height="38.00" rx="0" fill="#fff" stroke="#858e97" stroke-width="2"/>
<text x="437.9" y="1526.5" font-size="21.2" fill="#848c93" font-weight="normal" text-anchor="start" >/ 1</text>
<path d="M494.7,1513.7 L504.3,1521.9 L513.9,1513.7" fill="none" stroke="#c4c4c4" stroke-width="1.7" />
<polyline points="414.3,1520.4 400.0,1520.4" fill="none" stroke="#676a6a" stroke-width="1.7" />
<polygon points="386.3,1520.4 406.9,1513.0 405.3,1520.4 406.9,1527.8" fill="#505252"/>
<rect x="267.00" y="1498.00" width="118.00" height="46.00" rx="0" fill="#fff" stroke="#858e97" stroke-width="2"/>
<text x="324.5" y="1528.2" font-size="21.2" fill="#a9c9e6" font-weight="normal" text-anchor="middle" >16</text>
<polygon points="236.8,1520.6 249.2,1513.2 247.6,1520.6 249.2,1528.0" fill="#505252"/>
<polygon points="250.1,1520.6 263.1,1513.2 261.5,1520.6 263.1,1528.0" fill="#505252"/>
<polyline points="262.0,1520.6 266.1,1520.6" fill="none" stroke="#676a6a" stroke-width="1.7" />
<rect x="225.00" y="1515.00" width="11.00" height="11.00" rx="2" fill="#fff" stroke="#666a6e" stroke-width="2"/>
<text x="104.4" y="1525.2" font-size="17.5" fill="#8c8e90" font-weight="normal" text-anchor="start" >(MHz) MCO1</text>
<rect x="0.00" y="1634.00" width="2332.00" height="8.00" rx="0" fill="#fff"/>
<circle cx="480.0" cy="380.6" r="5.4" fill="#505252"/>
<circle cx="376.3" cy="506.3" r="5.4" fill="#505252"/>
<circle cx="357.0" cy="785.2" r="5.4" fill="#505252"/>
<circle cx="913.0" cy="581.1" r="5.4" fill="#505252"/>
<circle cx="631.2" cy="744.6" r="5.4" fill="#505252"/>
<circle cx="1524.3" cy="581.2" r="5.4" fill="#505252"/>
</svg>
</body></html>
